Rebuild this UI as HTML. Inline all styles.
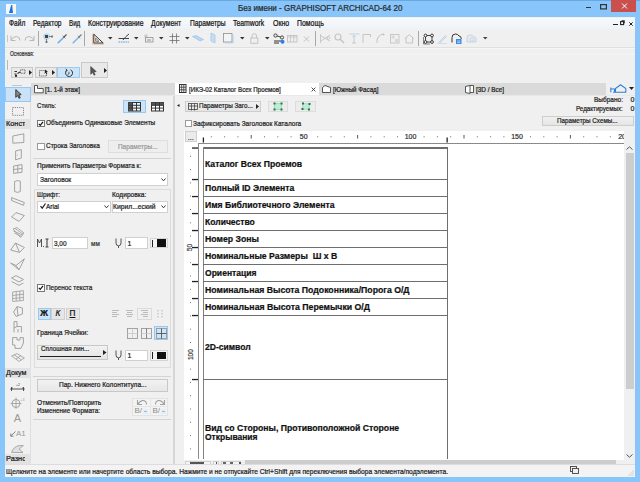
<!DOCTYPE html>
<html><head><meta charset="utf-8"><style>
*{margin:0;padding:0;box-sizing:border-box}
html,body{width:640px;height:482px;overflow:hidden;background:#f0f0f0}
body{position:relative;font-family:"Liberation Sans", sans-serif}
.a{position:absolute}
.t{white-space:pre;transform-origin:0 0;-webkit-text-stroke:0.22px currentColor}
svg{overflow:visible}
</style></head><body>
<div class="a" style="left:0px;top:0px;width:640px;height:482px;background:#87c5fa;"></div>
<div class="a" style="left:0px;top:0px;width:640px;height:1px;background:#6aa9e0"></div>
<svg class="a" style="left:6px;top:4px;" width="10" height="10" viewBox="0 0 10 10"><rect x="0" y="0" width="10" height="10" fill="#f4f8fb"/><path d="M3 9 L5.2 1 L6.5 1 L7 9 Z" fill="#1c6fe8"/><path d="M6.5 1 L9 1 L9 9 L7 9 Z" fill="#fdf6d8"/></svg>
<div class="a t" style="left:237.75px;top:4.39px;font-size:8.2px;line-height:9.02px;font-weight:normal;color:#2a2a2a;transform:scaleX(0.9804);">Без имени - GRAPHISOFT ARCHICAD-64 20</div>
<div class="a" style="left:585.5px;top:7.2px;width:5.5px;height:1.2px;background:#333"></div>
<svg class="a" style="left:599.5px;top:4px;" width="7" height="5.5" viewBox="0 0 7 5.5"><rect x="0.6" y="0.6" width="5.8" height="4.3" fill="none" stroke="#333" stroke-width="1.2"/></svg>
<div class="a" style="left:610.8px;top:0px;width:25px;height:11.8px;background:#c9504d;"></div>
<svg class="a" style="left:620.8px;top:3.2px;" width="7" height="6" viewBox="0 0 7 6"><path d="M1 0.5 L6 5.5 M6 0.5 L1 5.5" stroke="#fff" stroke-width="1"/></svg>
<div class="a" style="left:5px;top:17px;width:630px;height:460px;background:#f0f0f0;"></div>
<div class="a" style="left:5px;top:17.5px;width:630px;height:11px;background:linear-gradient(#ffffff 0px,#f6f8fb 1.5px,#eef3f8);"></div>
<div class="a t" style="left:8.75px;top:18.89px;font-size:8.2px;line-height:9.02px;font-weight:normal;color:#111;transform:scaleX(0.8068);">Файл</div>
<div class="a t" style="left:32.50px;top:18.89px;font-size:8.2px;line-height:9.02px;font-weight:normal;color:#111;transform:scaleX(0.8085);">Редактор</div>
<div class="a t" style="left:68.75px;top:18.89px;font-size:8.2px;line-height:9.02px;font-weight:normal;color:#111;transform:scaleX(0.7595);">Вид</div>
<div class="a t" style="left:87.50px;top:18.89px;font-size:8.2px;line-height:9.02px;font-weight:normal;color:#111;transform:scaleX(0.8360);">Конструирование</div>
<div class="a t" style="left:151.25px;top:18.89px;font-size:8.2px;line-height:9.02px;font-weight:normal;color:#111;transform:scaleX(0.8258);">Документ</div>
<div class="a t" style="left:189.50px;top:18.89px;font-size:8.2px;line-height:9.02px;font-weight:normal;color:#111;transform:scaleX(0.8132);">Параметры</div>
<div class="a t" style="left:233.25px;top:18.89px;font-size:8.2px;line-height:9.02px;font-weight:normal;color:#111;transform:scaleX(0.8375);">Teamwork</div>
<div class="a t" style="left:272.50px;top:18.89px;font-size:8.2px;line-height:9.02px;font-weight:normal;color:#111;transform:scaleX(0.8539);">Окно</div>
<div class="a t" style="left:297.00px;top:18.89px;font-size:8.2px;line-height:9.02px;font-weight:normal;color:#111;transform:scaleX(0.8458);">Помощь</div>
<div class="a" style="left:613px;top:24px;width:4.5px;height:1.2px;background:#222"></div>
<svg class="a" style="left:620.3px;top:20.3px;" width="5" height="5" viewBox="0 0 5 5"><rect x="0.6" y="1.6" width="3" height="3" fill="none" stroke="#222" stroke-width="1.1"/><path d="M1.6 0.6 H4.4 V3.4" fill="none" stroke="#222" stroke-width="0.8"/></svg>
<svg class="a" style="left:628.8px;top:21.8px;" width="4" height="4" viewBox="0 0 4 4"><path d="M0.3 0.3 L3.7 3.7 M3.7 0.3 L0.3 3.7" stroke="#222" stroke-width="1"/></svg>
<div class="a" style="left:5px;top:28.5px;width:630px;height:19px;background:#f0f0f0;"></div>
<div class="a" style="left:5px;top:47px;width:630px;height:1px;background:#e0e0e0"></div>
<div class="a" style="left:5px;top:48px;width:630px;height:1px;background:#f6f6f6"></div>
<div class="a" style="left:5px;top:54px;width:630px;height:1px;background:#f5f5f5"></div>
<div class="a t" style="left:10.00px;top:49.72px;font-size:6.5px;line-height:7.15px;font-weight:normal;color:#333;transform:scaleX(0.7619);">Основная:</div>
<div class="a" style="left:7px;top:60px;width:1px;height:10px;background:#b8b8b8"></div>
<div class="a" style="left:10.5px;top:67px;width:22.0px;height:10.5px;background:#e9e9e9;box-shadow:inset 0 0 0 1px #c9c9c9;"></div>
<div class="a" style="left:34.5px;top:67px;width:22.0px;height:10.5px;background:#e9e9e9;box-shadow:inset 0 0 0 1px #c9c9c9;"></div>
<div class="a" style="left:57px;top:67px;width:23px;height:10.5px;background:#cce4f7;box-shadow:inset 0 0 0 1px #9ccaf0;"></div>
<div class="a" style="left:81px;top:62px;width:27px;height:15.5px;background:#e9e9e9;box-shadow:inset 0 0 0 1px #c9c9c9;"></div>
<div class="a" style="left:31px;top:82.5px;width:604px;height:12px;background:#dadada;"></div>
<div class="a" style="left:174.5px;top:82.5px;width:144px;height:12px;background:#ffffff;"></div>
<div class="a" style="left:5px;top:94.5px;width:630px;height:1px;background:#e8e8e8"></div>
<div class="a" style="left:5px;top:82.5px;width:26px;height:381.5px;background:#f1f1f1;"></div>
<div class="a" style="left:30.3px;top:95px;width:1px;height:369px;background:#dedede"></div>
<div class="a" style="left:5px;top:86.6px;width:26px;height:15.7px;background:#c9e2f8;box-shadow:inset 0 0 0 1px #98c8f0;"></div>
<div class="a" style="left:5px;top:119px;width:25.5px;height:9.5px;background:#e2e2e2;"></div>
<div class="a t" style="left:5.80px;top:119.94px;font-size:7.2px;line-height:7.92px;font-weight:normal;color:#1a1a1a;transform:scaleX(1.0197);">Констр</div>
<div class="a" style="left:25.3px;top:119px;width:5.2px;height:9.5px;background:#e2e2e2;"></div>
<div class="a" style="left:5px;top:367.5px;width:25.5px;height:10px;background:#e2e2e2;"></div>
<div class="a t" style="left:5.80px;top:368.74px;font-size:7.2px;line-height:7.92px;font-weight:normal;color:#1a1a1a;transform:scaleX(0.9932);">Докум</div>
<div class="a" style="left:5px;top:453.5px;width:25.5px;height:10px;background:#e2e2e2;"></div>
<div class="a t" style="left:5.80px;top:454.74px;font-size:7.2px;line-height:7.92px;font-weight:normal;color:#1a1a1a;transform:scaleX(1.0288);">Разнос</div>
<div class="a" style="left:25.3px;top:453.5px;width:5.2px;height:10px;background:#e2e2e2;"></div>
<svg class="a" style="left:33.5px;top:84.8px;" width="10" height="8.5" viewBox="0 0 10 8.5"><path d="M0.5 0.5 H3.5 V3.5 H9.2 V7.8 H0.5 Z" fill="#fff" stroke="#444" stroke-width="0.9"/></svg>
<div class="a t" style="left:45.00px;top:86.38px;font-size:6.4px;line-height:7.04px;font-weight:normal;color:#222;transform:scaleX(0.9859);">[1. 1-й этаж]</div>
<svg class="a" style="left:179.2px;top:84.3px;" width="7.5" height="9" viewBox="0 0 7.5 9"><rect x="0.5" y="0.5" width="6.5" height="8" fill="none" stroke="#333" stroke-width="1"/><path d="M0.5 3.2 H7 M0.5 5.8 H7 M2.7 0.5 V8.5 M4.8 0.5 V8.5" stroke="#333" stroke-width="0.8"/></svg>
<div class="a t" style="left:188.75px;top:85.88px;font-size:6.4px;line-height:7.04px;font-weight:normal;color:#222;transform:scaleX(0.9666);">[ИКЭ-02 Каталог Всех Проемов]</div>
<svg class="a" style="left:310.5px;top:87.2px;" width="5" height="5" viewBox="0 0 5 5"><path d="M0.6 0.6 L4.4 4.4 M4.4 0.6 L0.6 4.4" stroke="#333" stroke-width="0.9"/></svg>
<svg class="a" style="left:322px;top:85px;" width="9" height="8" viewBox="0 0 9 8"><path d="M0.5 7.5 V2.5 L3 0.5 L8.5 2.5 V7.5 Z" fill="#fff" stroke="#444" stroke-width="0.9"/></svg>
<div class="a t" style="left:332.50px;top:85.88px;font-size:6.4px;line-height:7.04px;font-weight:normal;color:#222;transform:scaleX(0.9752);">[Южный Фасад]</div>
<svg class="a" style="left:465px;top:84.5px;" width="9" height="9" viewBox="0 0 9 9"><path d="M0.5 1.5 L5 0.5 V8.5 L0.5 7.5 Z M5 0.5 H8.5 V7.5 H5" fill="#fff" stroke="#444" stroke-width="0.9"/></svg>
<div class="a t" style="left:476.00px;top:85.88px;font-size:6.4px;line-height:7.04px;font-weight:normal;color:#222;">[3D / Все]</div>
<div class="a" style="left:606px;top:82.5px;width:29px;height:12px;background:#f0f0f0;"></div>
<svg class="a" style="left:609.5px;top:84px;" width="17" height="9" viewBox="0 0 17 9"><path d="M0.8 3.5 V8.3 M0.8 5 H4.5 V8.3 M3 8.3 H16.2 M5.5 8.3 V4.5 L10.5 0.8 L15.8 4.5 V8.3" fill="none" stroke="#2e80d8" stroke-width="1.1"/></svg>
<svg class="a" style="left:629px;top:87px;" width="5" height="3" viewBox="0 0 5 3"><path d="M0 0 H5 L2.5 3 Z" fill="#222"/></svg>
<div class="a" style="left:30.5px;top:95.5px;width:143.5px;height:368.5px;background:#f0f0f0;"></div>
<div class="a" style="left:173.3px;top:95.5px;width:1.7px;height:368.5px;background:#d6d6d6"></div>
<div class="a t" style="left:36.75px;top:102.45px;font-size:7.0px;line-height:7.70px;font-weight:normal;color:#222;transform:scaleX(0.8692);">Стиль:</div>
<div class="a" style="left:123px;top:99.5px;width:23px;height:13.5px;background:#cce4f7;box-shadow:inset 0 0 0 1px #99c8ef;"></div>
<svg class="a" style="left:128px;top:101.8px;" width="13" height="9.5" viewBox="0 0 13 9.5"><rect x="0.5" y="0.5" width="12" height="8.5" fill="#eaf4fc" stroke="#333" stroke-width="1"/><rect x="0.5" y="0.5" width="4" height="8.5" fill="#555"/><path d="M0.5 3.3 H12.5 M0.5 6.1 H12.5 M4.5 0.5 V9 M8.5 0.5 V9" stroke="#333" stroke-width="1"/></svg>
<svg class="a" style="left:150.8px;top:101.8px;" width="13" height="9.5" viewBox="0 0 13 9.5"><rect x="0.5" y="0.5" width="12" height="8.5" fill="#fff" stroke="#333" stroke-width="1"/><rect x="0.5" y="0.5" width="12" height="2.8" fill="#555"/><path d="M0.5 3.3 H12.5 M0.5 6.1 H12.5 M4.5 0.5 V9 M8.5 0.5 V9" stroke="#333" stroke-width="1"/></svg>
<div class="a" style="left:37px;top:119.5px;width:7.5px;height:7.5px;background:#ffffff;box-shadow:inset 0 0 0 1px #777;"></div>
<svg class="a" style="left:37px;top:119.5px;" width="8" height="8" viewBox="0 0 8 8"><path d="M1.8 3.8 L3.3 5.4 L6 1.9" fill="none" stroke="#111" stroke-width="1.2"/></svg>
<div class="a t" style="left:45.75px;top:119.35px;font-size:7.0px;line-height:7.70px;font-weight:normal;color:#222;transform:scaleX(0.9246);">Объединить Одинаковые Элементы</div>
<div class="a" style="left:37px;top:142.5px;width:7.5px;height:7.5px;background:#ffffff;box-shadow:inset 0 0 0 1px #9a9a9a;"></div>
<div class="a t" style="left:45.75px;top:142.45px;font-size:7.0px;line-height:7.70px;font-weight:normal;color:#222;transform:scaleX(0.9227);">Строка Заголовка</div>
<div class="a" style="left:107.5px;top:139.5px;width:60px;height:13px;background:#eeeeee;box-shadow:inset 0 0 0 1px #dedede;"></div>
<div class="a t" style="left:117.50px;top:142.55px;font-size:7.0px;line-height:7.70px;font-weight:normal;color:#9a9a9a;transform:scaleX(0.9153);">Параметры...</div>
<div class="a" style="left:33px;top:158px;width:138px;height:1px;background:#d4d4d4"></div>
<div class="a t" style="left:37.00px;top:162.05px;font-size:7.0px;line-height:7.70px;font-weight:normal;color:#222;transform:scaleX(0.9224);">Применить Параметры Формата к:</div>
<div class="a" style="left:37px;top:173px;width:131px;height:12.5px;background:#ffffff;box-shadow:inset 0 0 0 1px #d0d0d0;"></div>
<div class="a t" style="left:40.00px;top:175.55px;font-size:7.0px;line-height:7.70px;font-weight:normal;color:#222;transform:scaleX(0.9492);">Заголовок</div>
<svg class="a" style="left:161px;top:177.5px;" width="5" height="4" viewBox="0 0 5 4"><path d="M0.5 0.5 L2.5 2.8 L4.5 0.5" fill="none" stroke="#333" stroke-width="1"/></svg>
<div class="a" style="left:33.5px;top:189.2px;width:137px;height:178.5px;background:transparent;box-shadow:inset 0 0 0 1px #dcdcdc;"></div>
<div class="a t" style="left:37.00px;top:190.55px;font-size:7.0px;line-height:7.70px;font-weight:normal;color:#222;transform:scaleX(0.9206);">Шрифт:</div>
<div class="a t" style="left:112.00px;top:190.55px;font-size:7.0px;line-height:7.70px;font-weight:normal;color:#222;transform:scaleX(0.9416);">Кодировка:</div>
<div class="a" style="left:37px;top:200.5px;width:73.5px;height:12px;background:#ffffff;box-shadow:inset 0 0 0 1px #d0d0d0;"></div>
<svg class="a" style="left:39.5px;top:203px;" width="6" height="6" viewBox="0 0 6 6"><path d="M0.5 3.2 L2.2 5.2 L5.5 0.5" fill="none" stroke="#222" stroke-width="1.2"/></svg>
<div class="a t" style="left:46.00px;top:202.55px;font-size:7.0px;line-height:7.70px;font-weight:normal;color:#222;transform:scaleX(0.9275);">Arial</div>
<svg class="a" style="left:104px;top:205px;" width="5" height="4" viewBox="0 0 5 4"><path d="M0.5 0.5 L2.5 2.8 L4.5 0.5" fill="none" stroke="#333" stroke-width="1"/></svg>
<div class="a" style="left:111.75px;top:200.5px;width:56.25px;height:12px;background:#ffffff;box-shadow:inset 0 0 0 1px #d0d0d0;"></div>
<div class="a t" style="left:113.00px;top:202.55px;font-size:7.0px;line-height:7.70px;font-weight:normal;color:#222;transform:scaleX(0.9659);">Кирил...еский</div>
<svg class="a" style="left:161px;top:205px;" width="5" height="4" viewBox="0 0 5 4"><path d="M0.5 0.5 L2.5 2.8 L4.5 0.5" fill="none" stroke="#333" stroke-width="1"/></svg>
<svg class="a" style="left:37px;top:238px;" width="13" height="10" viewBox="0 0 13 10"><path d="M0.5 9 V1 L2.5 5 L4.5 1 V9" fill="none" stroke="#444" stroke-width="0.9"/><path d="M6 8.5 H7" stroke="#444" stroke-width="0.9"/><path d="M10 1 V9 M8.5 1 H11.5 M8.5 9 H11.5" stroke="#444" stroke-width="1.1"/></svg>
<div class="a" style="left:52px;top:237px;width:36px;height:12px;background:#ffffff;box-shadow:inset 0 0 0 1px #d0d0d0;"></div>
<div class="a t" style="left:53.75px;top:239.95px;font-size:7.0px;line-height:7.70px;font-weight:normal;color:#222;transform:scaleX(0.9174);">3,00</div>
<div class="a t" style="left:90.50px;top:240.25px;font-size:7.0px;line-height:7.70px;font-weight:normal;color:#333;transform:scaleX(0.9091);">мм</div>
<svg class="a" style="left:114.5px;top:238px;" width="7" height="10" viewBox="0 0 7 10"><path d="M1 0.5 V5 Q1 7.8 3.5 7.8 Q6 7.8 6 5 V0.5 M3.5 7.8 V10" fill="none" stroke="#444" stroke-width="0.9"/></svg>
<div class="a" style="left:125px;top:237px;width:23px;height:12px;background:#ffffff;box-shadow:inset 0 0 0 1px #d0d0d0;"></div>
<div class="a t" style="left:127.50px;top:239.95px;font-size:7.0px;line-height:7.70px;font-weight:normal;color:#222;">1</div>
<div class="a" style="left:150px;top:238px;width:18px;height:10px;background:#f4f4f4;box-shadow:inset 0 0 0 1px #d4d4d4;"></div>
<div class="a" style="left:152.3px;top:239.5px;width:1.2px;height:7.2px;background:#222"></div>
<div class="a" style="left:156.5px;top:239.4px;width:9.8px;height:7.5px;background:#111;"></div>
<div class="a" style="left:37px;top:284px;width:7.5px;height:7.5px;background:#ffffff;box-shadow:inset 0 0 0 1px #777;"></div>
<svg class="a" style="left:37px;top:284px;" width="8" height="8" viewBox="0 0 8 8"><path d="M1.8 3.8 L3.3 5.4 L6 1.9" fill="none" stroke="#111" stroke-width="1.2"/></svg>
<div class="a t" style="left:45.75px;top:284.25px;font-size:7.0px;line-height:7.70px;font-weight:normal;color:#222;transform:scaleX(0.9139);">Перенос текста</div>
<div class="a" style="left:37.5px;top:308px;width:13px;height:11.5px;background:#cce4f7;box-shadow:inset 0 0 0 1px #99c8ef;"></div>
<div class="a t" style="left:40.16px;top:309.02px;font-size:8.5px;line-height:9.35px;font-weight:bold;color:#111;">Ж</div>
<div class="a" style="left:51.25px;top:308px;width:13.25px;height:11.5px;background:#e6e6e6;box-shadow:inset 0 0 0 1px #d0d0d0;"></div>
<div class="a t" style="left:55.41px;top:309.19px;font-size:8.2px;line-height:9.02px;font-weight:normal;color:#111;font-style:italic;">К</div>
<div class="a" style="left:65.5px;top:308px;width:14px;height:11.5px;background:#e6e6e6;box-shadow:inset 0 0 0 1px #d0d0d0;"></div>
<div class="a t" style="left:69.55px;top:309.19px;font-size:8.2px;line-height:9.02px;font-weight:normal;color:#111;text-decoration:underline;">П</div>
<svg class="a" style="left:111px;top:309px;" width="9" height="9" viewBox="0 0 9 9"><path d="M1 1.5 H8 M1 3.5 H6 M1 5.5 H8 M1 7.5 H6" stroke="#b5b5b5" stroke-width="0.9"/></svg>
<svg class="a" style="left:125px;top:309px;" width="9" height="9" viewBox="0 0 9 9"><path d="M1 1.5 H8 M2 3.5 H7 M1 5.5 H8 M2 7.5 H7" stroke="#b5b5b5" stroke-width="0.9"/></svg>
<svg class="a" style="left:140px;top:309px;" width="9" height="9" viewBox="0 0 9 9"><path d="M1 1.5 H8 M3 3.5 H8 M1 5.5 H8 M3 7.5 H8" stroke="#b5b5b5" stroke-width="0.9"/></svg>
<svg class="a" style="left:156px;top:309px;" width="9" height="9" viewBox="0 0 9 9"><path d="M2 1 V2.5 M2 4 V5.5 M2 7 V8.5 M6 1 V2.5 M6 4 V5.5 M6 7 V8.5" stroke="#b5b5b5" stroke-width="1"/></svg>
<div class="a" style="left:136.5px;top:307.5px;width:15.5px;height:12px;background:transparent;box-shadow:inset 0 0 0 1px #dadada;"></div>
<div class="a t" style="left:37.00px;top:328.55px;font-size:7.0px;line-height:7.70px;font-weight:normal;color:#222;transform:scaleX(0.9450);">Граница Ячейки:</div>
<svg class="a" style="left:126.5px;top:327.5px;" width="11" height="11" viewBox="0 0 11 11"><rect x="0.5" y="0.5" width="10" height="10" fill="none" stroke="#9a9a9a" stroke-width="0.9"/><path d="M5.5 0.5 V10.5 M0.5 5.5 H10.5" stroke="#c8c8c8" stroke-width="0.8"/></svg>
<svg class="a" style="left:140.5px;top:327.5px;" width="11" height="11" viewBox="0 0 11 11"><rect x="0.5" y="0.5" width="10" height="10" fill="none" stroke="#9a9a9a" stroke-width="0.9"/><path d="M5.5 0.5 V10.5" stroke="#777" stroke-width="0.9"/><path d="M0.5 5.5 H10.5" stroke="#c8c8c8" stroke-width="0.8"/></svg>
<div class="a" style="left:154px;top:326px;width:14px;height:13.5px;background:#cce4f7;box-shadow:inset 0 0 0 1px #99c8ef;"></div>
<svg class="a" style="left:155.5px;top:327.5px;" width="11" height="11" viewBox="0 0 11 11"><rect x="0.5" y="0.5" width="10" height="10" fill="none" stroke="#9a9a9a" stroke-width="0.9"/><path d="M5.5 0.5 V10.5 M0.5 5.5 H10.5" stroke="#555" stroke-width="0.9"/></svg>
<div class="a" style="left:37px;top:344.5px;width:71px;height:15px;background:linear-gradient(#f2f2f2,#e4e4e4);box-shadow:inset 0 0 0 1px #c8c8c8;"></div>
<div class="a t" style="left:40.50px;top:345.05px;font-size:7.0px;line-height:7.70px;font-weight:normal;color:#222;transform:scaleX(0.8982);">Сплошная лин...</div>
<div class="a" style="left:40px;top:355.5px;width:61px;height:1.2px;background:#222"></div>
<svg class="a" style="left:103px;top:350px;" width="4" height="5" viewBox="0 0 4 5"><path d="M0 0 L3.5 2.5 L0 5 Z" fill="#222"/></svg>
<svg class="a" style="left:114.5px;top:350px;" width="7" height="10" viewBox="0 0 7 10"><path d="M1 0.5 V5 Q1 7.8 3.5 7.8 Q6 7.8 6 5 V0.5 M3.5 7.8 V10" fill="none" stroke="#444" stroke-width="0.9"/></svg>
<div class="a" style="left:125px;top:350px;width:22.5px;height:10.5px;background:#ffffff;box-shadow:inset 0 0 0 1px #d0d0d0;"></div>
<div class="a t" style="left:127.50px;top:351.55px;font-size:7.0px;line-height:7.70px;font-weight:normal;color:#222;">1</div>
<div class="a" style="left:150px;top:350px;width:18px;height:10.5px;background:#f4f4f4;box-shadow:inset 0 0 0 1px #d4d4d4;"></div>
<div class="a" style="left:152.3px;top:351.6px;width:1.2px;height:7.2px;background:#222"></div>
<div class="a" style="left:156.5px;top:351.5px;width:9.8px;height:7.5px;background:#111;"></div>
<div class="a" style="left:33px;top:375.5px;width:138px;height:1px;background:#d4d4d4"></div>
<div class="a" style="left:37px;top:378.75px;width:131px;height:13px;background:linear-gradient(#f3f3f3,#e6e6e6);box-shadow:inset 0 0 0 1px #c8c8c8;"></div>
<div class="a t" style="left:58.75px;top:381.05px;font-size:7.0px;line-height:7.70px;font-weight:normal;color:#222;transform:scaleX(0.9343);">Пар. Нижнего Колонтитула...</div>
<div class="a t" style="left:37.00px;top:399.05px;font-size:7.0px;line-height:7.70px;font-weight:normal;color:#222;transform:scaleX(0.9433);">Отменить/Повторить</div>
<div class="a t" style="left:37.00px;top:407.05px;font-size:7.0px;line-height:7.70px;font-weight:normal;color:#222;transform:scaleX(0.9137);">Изменение Формата:</div>
<div class="a" style="left:132px;top:398px;width:35.5px;height:17.5px;background:#f3f3f3;box-shadow:inset 0 0 0 1px #e2e2e2;"></div>
<div class="a" style="left:132px;top:406.2px;width:35.5px;height:1px;background:#e6e6e6"></div>
<div class="a" style="left:149.5px;top:398px;width:1px;height:17.5px;background:#e6e6e6"></div>
<svg class="a" style="left:136px;top:399.3px;" width="12" height="7" viewBox="0 0 12 7"><path d="M1.5 1 V5.5 H6 M1.8 5.2 Q4.5 1 7.5 1.5 Q10.5 2 10.5 5.5" fill="none" stroke="#a0a0a0" stroke-width="1.1"/></svg>
<svg class="a" style="left:153.5px;top:399.3px;" width="12" height="7" viewBox="0 0 12 7"><path d="M10.5 1 V5.5 H6 M10.2 5.2 Q7.5 1 4.5 1.5 Q1.5 2 1.5 5.5" fill="none" stroke="#a0a0a0" stroke-width="1.1"/></svg>
<div class="a t" style="left:134.50px;top:406.70px;font-size:8px;line-height:8.80px;font-weight:normal;color:#8c8c8c;-webkit-text-stroke:0;">B/</div>
<div class="a" style="left:143px;top:409px;width:5px;height:5px;background:#e3eef8;"></div>
<div class="a" style="left:144px;top:411.3px;width:3px;height:0.8px;background:#9fb9d2"></div>
<div class="a t" style="left:152.50px;top:406.70px;font-size:8px;line-height:8.80px;font-weight:normal;color:#8c8c8c;-webkit-text-stroke:0;">B/</div>
<div class="a" style="left:161px;top:409px;width:5px;height:5px;background:#e3eef8;"></div>
<div class="a" style="left:162px;top:411.3px;width:3px;height:0.8px;background:#9fb9d2"></div>
<div class="a" style="left:33px;top:419px;width:138px;height:1px;background:#d4d4d4"></div>
<div class="a" style="left:175px;top:95.5px;width:460px;height:368.5px;background:#f0f0f0;"></div>
<svg class="a" style="left:176.5px;top:103.5px;" width="2.5" height="3" viewBox="0 0 2.5 3"><path d="M2.5 0 L0 1.5 L2.5 3 Z" fill="#222"/></svg>
<div class="a" style="left:184.5px;top:100.5px;width:76.5px;height:11.5px;background:linear-gradient(#f2f2f2,#e3e3e3);box-shadow:inset 0 0 0 1px #cdcdcd;"></div>
<svg class="a" style="left:188px;top:102.5px;" width="10" height="8" viewBox="0 0 10 8"><rect x="0.5" y="0.5" width="9" height="6" fill="none" stroke="#444" stroke-width="0.8"/><path d="M0.5 3 H9.5 M3.5 0.5 V7.5 M6.5 0.5 V7.5" stroke="#444" stroke-width="0.8"/></svg>
<div class="a t" style="left:198.75px;top:102.05px;font-size:7.0px;line-height:7.70px;font-weight:normal;color:#222;transform:scaleX(0.9031);">Параметры Заго...</div>
<svg class="a" style="left:256px;top:103.5px;" width="3" height="5" viewBox="0 0 3 5"><path d="M0 0 L3 2.5 L0 5 Z" fill="#222"/></svg>
<div class="a" style="left:267.5px;top:100.5px;width:20.5px;height:11.5px;background:#ececec;box-shadow:inset 0 0 0 1px #dcdcdc;"></div>
<svg class="a" style="left:272.5px;top:102px;" width="10" height="9" viewBox="0 0 10 9"><rect x="1.5" y="1.5" width="7" height="6" fill="#b9f0d2" stroke="#7fd0a6" stroke-width="0.6"/><rect x="0.5" y="0.5" width="2" height="2" fill="#2f6f50"/><rect x="7.5" y="0.5" width="2" height="2" fill="#2f6f50"/><rect x="0.5" y="6.5" width="2" height="2" fill="#2f6f50"/><rect x="7.5" y="6.5" width="2" height="2" fill="#2f6f50"/></svg>
<div class="a" style="left:295px;top:100.5px;width:21px;height:11.5px;background:#ececec;box-shadow:inset 0 0 0 1px #dcdcdc;"></div>
<svg class="a" style="left:300.5px;top:102px;" width="10" height="9" viewBox="0 0 10 9"><path d="M2 1.5 L8.5 2 L8 7.5 L1.5 7 Z" fill="#b9f0d2" stroke="#7fd0a6" stroke-width="0.6"/><rect x="1" y="0.5" width="2" height="2" fill="#2f6f50"/><rect x="7.5" y="1" width="2" height="2" fill="#2f6f50"/><rect x="0.5" y="6" width="2" height="2" fill="#2f6f50"/><rect x="7" y="6.5" width="2" height="2" fill="#2f6f50"/></svg>
<div class="a" style="left:184.5px;top:119.5px;width:7.5px;height:7.5px;background:#ffffff;box-shadow:inset 0 0 0 1px #9a9a9a;"></div>
<div class="a t" style="left:193.00px;top:119.55px;font-size:7.0px;line-height:7.70px;font-weight:normal;color:#222;transform:scaleX(0.9303);">Зафиксировать Заголовок Каталога</div>
<div class="a t" style="left:593.80px;top:96.05px;font-size:7.0px;line-height:7.70px;font-weight:normal;color:#222;transform:scaleX(0.9294);">Выбрано:</div>
<div class="a t" style="left:630.50px;top:96.05px;font-size:7.0px;line-height:7.70px;font-weight:normal;color:#222;">0</div>
<div class="a t" style="left:576.00px;top:104.65px;font-size:7.0px;line-height:7.70px;font-weight:normal;color:#222;transform:scaleX(0.8869);">Редактируемых:</div>
<div class="a t" style="left:630.50px;top:104.65px;font-size:7.0px;line-height:7.70px;font-weight:normal;color:#222;">0</div>
<div class="a" style="left:541.5px;top:115.5px;width:92px;height:10.5px;background:linear-gradient(#f2f2f2,#e3e3e3);box-shadow:inset 0 0 0 1px #cdcdcd;"></div>
<div class="a t" style="left:556.75px;top:117.05px;font-size:7.0px;line-height:7.70px;font-weight:normal;color:#222;transform:scaleX(0.8988);">Параметры Схемы...</div>
<div class="a" style="left:184px;top:131px;width:439.5px;height:329.5px;background:#ffffff;"></div>
<div class="a" style="left:184.5px;top:130.5px;width:12.5px;height:11.5px;background:#ebebeb;box-shadow:inset 0 0 0 1px #cfcfcf;"></div>
<div class="a t" style="left:187.78px;top:133.55px;font-size:7.0px;line-height:7.70px;font-weight:normal;color:#333;">...</div>
<div class="a" style="left:198px;top:142.5px;width:425.5px;height:1.4px;background:#8a8a8a"></div>
<div class="a" style="left:197.8px;top:142.5px;width:1.4px;height:316.5px;background:#8a8a8a"></div>
<svg class="a" style="left:198px;top:131px;" width="425" height="12" viewBox="0 0 425 12"><rect x="12.80" y="5.3" width="1" height="1" fill="#666"/><rect x="26.10" y="5.3" width="1" height="1" fill="#666"/><rect x="39.40" y="5.3" width="1" height="1" fill="#666"/><rect x="52.70" y="4" width="1" height="3.5" fill="#555"/><rect x="66.00" y="5.3" width="1" height="1" fill="#666"/><rect x="79.30" y="5.3" width="1" height="1" fill="#666"/><rect x="92.60" y="5.3" width="1" height="1" fill="#666"/><rect x="119.20" y="5.3" width="1" height="1" fill="#666"/><rect x="132.50" y="5.3" width="1" height="1" fill="#666"/><rect x="145.80" y="5.3" width="1" height="1" fill="#666"/><rect x="159.10" y="4" width="1" height="3.5" fill="#555"/><rect x="172.40" y="5.3" width="1" height="1" fill="#666"/><rect x="185.70" y="5.3" width="1" height="1" fill="#666"/><rect x="199.00" y="5.3" width="1" height="1" fill="#666"/><rect x="225.60" y="5.3" width="1" height="1" fill="#666"/><rect x="238.90" y="5.3" width="1" height="1" fill="#666"/><rect x="252.20" y="5.3" width="1" height="1" fill="#666"/><rect x="265.50" y="4" width="1" height="3.5" fill="#555"/><rect x="278.80" y="5.3" width="1" height="1" fill="#666"/><rect x="292.10" y="5.3" width="1" height="1" fill="#666"/><rect x="305.40" y="5.3" width="1" height="1" fill="#666"/><rect x="332.00" y="5.3" width="1" height="1" fill="#666"/><rect x="345.30" y="5.3" width="1" height="1" fill="#666"/><rect x="358.60" y="5.3" width="1" height="1" fill="#666"/><rect x="371.90" y="4" width="1" height="3.5" fill="#555"/><rect x="385.20" y="5.3" width="1" height="1" fill="#666"/><rect x="398.50" y="5.3" width="1" height="1" fill="#666"/><rect x="411.80" y="5.3" width="1" height="1" fill="#666"/><rect x="4.75" y="6.5" width="1.3" height="5" fill="#222"/><rect x="248.5" y="6.5" width="1.3" height="5" fill="#222"/></svg>
<div class="a t" style="left:299.85px;top:133.25px;font-size:7px;line-height:7.70px;font-weight:normal;color:#333;">50</div>
<div class="a t" style="left:404.66px;top:133.25px;font-size:7px;line-height:7.70px;font-weight:normal;color:#333;">100</div>
<div class="a t" style="left:511.16px;top:133.25px;font-size:7px;line-height:7.70px;font-weight:normal;color:#333;">150</div>
<div class="a t" style="left:618.16px;top:133.25px;font-size:7px;line-height:7.70px;font-weight:normal;color:#333;">200</div>
<div class="a" style="left:623.5px;top:131px;width:11.5px;height:12px;background:#f0f0f0;"></div>
<svg class="a" style="left:184px;top:131px;" width="14" height="330" viewBox="0 0 14 330"><rect x="8" y="16.40" width="6" height="1.3" fill="#222"/><rect x="8" y="47.90" width="6" height="1.3" fill="#222"/><rect x="8" y="64.90" width="6" height="1.3" fill="#222"/><rect x="8" y="81.90" width="6" height="1.3" fill="#222"/><rect x="8" y="98.90" width="6" height="1.3" fill="#222"/><rect x="8" y="115.90" width="6" height="1.3" fill="#222"/><rect x="8" y="132.90" width="6" height="1.3" fill="#222"/><rect x="8" y="149.90" width="6" height="1.3" fill="#222"/><rect x="8" y="166.90" width="6" height="1.3" fill="#222"/><rect x="8" y="183.90" width="6" height="1.3" fill="#222"/><rect x="8" y="247.90" width="6" height="1.3" fill="#222"/><rect x="6" y="24.80" width="1" height="1" fill="#777"/><rect x="6" y="38.10" width="1" height="1" fill="#777"/><rect x="6" y="51.40" width="1" height="1" fill="#777"/><rect x="6" y="64.70" width="1" height="1" fill="#777"/><rect x="6" y="78.00" width="1" height="1" fill="#777"/><rect x="6" y="91.30" width="1" height="1" fill="#777"/><rect x="6" y="104.60" width="1" height="1" fill="#777"/><rect x="6" y="131.20" width="1" height="1" fill="#777"/><rect x="6" y="144.50" width="1" height="1" fill="#777"/><rect x="6" y="157.80" width="1" height="1" fill="#777"/><rect x="6" y="171.10" width="1" height="1" fill="#777"/><rect x="6" y="184.40" width="1" height="1" fill="#777"/><rect x="6" y="197.70" width="1" height="1" fill="#777"/><rect x="6" y="211.00" width="1" height="1" fill="#777"/><rect x="6" y="237.60" width="1" height="1" fill="#777"/><rect x="6" y="250.90" width="1" height="1" fill="#777"/><rect x="6" y="264.20" width="1" height="1" fill="#777"/><rect x="6" y="277.50" width="1" height="1" fill="#777"/><rect x="6" y="290.80" width="1" height="1" fill="#777"/><rect x="6" y="304.10" width="1" height="1" fill="#777"/><rect x="6" y="317.40" width="1" height="1" fill="#777"/></svg>
<div class="a t" style="left:186.38px;top:244.33px;font-size:6.5px;line-height:7.15px;font-weight:normal;color:#444;transform:rotate(-90deg);transform-origin:50% 50%;">50</div>
<div class="a t" style="left:184.57px;top:351.32px;font-size:6.5px;line-height:7.15px;font-weight:normal;color:#444;transform:rotate(-90deg);transform-origin:50% 50%;">100</div>
<div class="a" style="left:202.5px;top:147.3px;width:245.5px;height:1.6px;background:#6e6e6e"></div>
<div class="a" style="left:202.7px;top:147.3px;width:1.4px;height:311.5px;background:#808080"></div>
<div class="a" style="left:446.5px;top:147.3px;width:1.6px;height:311.5px;background:#6e6e6e"></div>
<div class="a" style="left:202.5px;top:178.7px;width:245.5px;height:1.6px;background:#6e6e6e"></div>
<div class="a" style="left:202.5px;top:195.7px;width:245.5px;height:1.6px;background:#6e6e6e"></div>
<div class="a" style="left:202.5px;top:212.7px;width:245.5px;height:1.6px;background:#6e6e6e"></div>
<div class="a" style="left:202.5px;top:229.7px;width:245.5px;height:1.6px;background:#6e6e6e"></div>
<div class="a" style="left:202.5px;top:246.7px;width:245.5px;height:1.6px;background:#6e6e6e"></div>
<div class="a" style="left:202.5px;top:263.7px;width:245.5px;height:1.6px;background:#6e6e6e"></div>
<div class="a" style="left:202.5px;top:280.7px;width:245.5px;height:1.6px;background:#6e6e6e"></div>
<div class="a" style="left:202.5px;top:297.7px;width:245.5px;height:1.6px;background:#6e6e6e"></div>
<div class="a" style="left:202.5px;top:314.7px;width:245.5px;height:1.6px;background:#6e6e6e"></div>
<div class="a" style="left:202.5px;top:378.7px;width:245.5px;height:1.6px;background:#6e6e6e"></div>
<div class="a t" style="left:205.20px;top:159.60px;font-size:8.9px;line-height:9.79px;font-weight:bold;color:#111;transform:scaleX(0.9721);">Каталог Всех Проемов</div>
<div class="a t" style="left:205.20px;top:184.20px;font-size:8.9px;line-height:9.79px;font-weight:bold;color:#111;transform:scaleX(0.9707);">Полный ID Элемента</div>
<div class="a t" style="left:205.20px;top:201.00px;font-size:8.9px;line-height:9.79px;font-weight:bold;color:#111;transform:scaleX(0.9736);">Имя Библиотечного Элемента</div>
<div class="a t" style="left:205.20px;top:217.81px;font-size:8.9px;line-height:9.79px;font-weight:bold;color:#111;transform:scaleX(0.9626);">Количество</div>
<div class="a t" style="left:205.20px;top:234.70px;font-size:8.9px;line-height:9.79px;font-weight:bold;color:#111;transform:scaleX(0.9794);">Номер Зоны</div>
<div class="a t" style="left:205.20px;top:252.20px;font-size:8.9px;line-height:9.79px;font-weight:bold;color:#111;transform:scaleX(0.9790);">Номинальные Размеры  Ш x В</div>
<div class="a t" style="left:205.20px;top:269.40px;font-size:8.9px;line-height:9.79px;font-weight:bold;color:#111;transform:scaleX(0.9635);">Ориентация</div>
<div class="a t" style="left:205.20px;top:285.90px;font-size:8.9px;line-height:9.79px;font-weight:bold;color:#111;transform:scaleX(0.9791);">Номинальная Высота Подоконника/Порога О/Д</div>
<div class="a t" style="left:205.20px;top:302.70px;font-size:8.9px;line-height:9.79px;font-weight:bold;color:#111;transform:scaleX(0.9830);">Номинальная Высота Перемычки О/Д</div>
<div class="a t" style="left:205.20px;top:343.20px;font-size:8.9px;line-height:9.79px;font-weight:bold;color:#111;transform:scaleX(0.9634);">2D-символ</div>
<div class="a t" style="left:205.20px;top:423.70px;font-size:8.9px;line-height:9.79px;font-weight:bold;color:#111;transform:scaleX(0.9773);">Вид со Стороны, Противоположной Стороне</div>
<div class="a t" style="left:205.20px;top:433.31px;font-size:8.9px;line-height:9.79px;font-weight:bold;color:#111;transform:scaleX(0.9551);">Открывания</div>
<div class="a" style="left:623.5px;top:143px;width:11px;height:317px;background:#f0f0f0;"></div>
<svg class="a" style="left:625.5px;top:146px;" width="7" height="4" viewBox="0 0 7 4"><path d="M0.5 3.5 L3.5 0.8 L6.5 3.5" fill="none" stroke="#555" stroke-width="1"/></svg>
<div class="a" style="left:626px;top:153px;width:8px;height:235.5px;background:#cdcdcd;"></div>
<svg class="a" style="left:625.5px;top:453.5px;" width="7" height="4" viewBox="0 0 7 4"><path d="M0.5 0.5 L3.5 3.2 L6.5 0.5" fill="none" stroke="#555" stroke-width="1"/></svg>
<svg class="a" style="left:619.5px;top:461px;" width="4" height="3" viewBox="0 0 4 3"><path d="M0 3 L2 0.5 L4 3 Z" fill="#555"/></svg>
<div class="a" style="left:184px;top:460px;width:439.5px;height:4px;background:#f0f0f0;"></div>
<div class="a" style="left:245px;top:460px;width:371px;height:3.5px;background:#cdcdcd;"></div>
<div class="a" style="left:184.5px;top:460.5px;width:26.5px;height:4px;background:#f4f4f4;box-shadow:inset 0 0 0 1px #cfcfcf;"></div>
<div class="a" style="left:190px;top:462.3px;width:14px;height:1.4px;background:#555"></div>
<div class="a" style="left:213px;top:460.5px;width:6px;height:4px;background:#f4f4f4;box-shadow:inset 0 0 0 1px #cfcfcf;"></div>
<div class="a" style="left:215.5px;top:462.3px;width:1.3px;height:1.5px;background:#555"></div>
<div class="a" style="left:221px;top:460.5px;width:20px;height:4px;background:#f4f4f4;box-shadow:inset 0 0 0 1px #cfcfcf;"></div>
<div class="a" style="left:222.5px;top:461.8px;width:3px;height:2px;background:#666"></div>
<div class="a" style="left:230px;top:461.8px;width:3px;height:2px;background:#666"></div>
<div class="a" style="left:239px;top:462.3px;width:1.5px;height:1.5px;background:#555"></div>
<div class="a" style="left:5px;top:464px;width:630px;height:13px;background:#f3f3f3;"></div>
<div class="a" style="left:5px;top:464px;width:630px;height:1px;background:#dddddd"></div>
<div class="a t" style="left:6.00px;top:468.35px;font-size:7.0px;line-height:7.70px;font-weight:normal;color:#222;transform:scaleX(0.9528);">Щелкните на элементе или начертите область выбора. Нажмите и не отпускайте Ctrl+Shift для переключения выбора элемента/подэлемента.</div>
<svg class="a" style="left:569.5px;top:466.3px;" width="9" height="8" viewBox="0 0 9 8"><rect x="0.5" y="0.5" width="6" height="5" fill="none" stroke="#444" stroke-width="0.9"/><rect x="2.5" y="2.5" width="6" height="5" fill="#f0f0f0" stroke="#444" stroke-width="0.9"/></svg>
<div class="a" style="left:7px;top:35px;width:1px;height:7px;background:#c8c8c8"></div>
<svg class="a" style="left:10px;top:34.5px;" width="11" height="7" viewBox="0 0 11 7"><path d="M1 0.8 V5.5 H5.5 M1.2 5.2 Q3.5 1.2 6.5 1.5 Q10 2 10 5.5" fill="none" stroke="#b8b8b8" stroke-width="1"/></svg>
<svg class="a" style="left:24px;top:34.5px;" width="11" height="7" viewBox="0 0 11 7"><path d="M10 0.8 V5.5 H5.5 M9.8 5.2 Q7.5 1.2 4.5 1.5 Q1 2 1 5.5" fill="none" stroke="#b8b8b8" stroke-width="1"/></svg>
<div class="a" style="left:38px;top:30.5px;width:1px;height:15.0px;background:#a8a8a8"></div>
<svg class="a" style="left:42.5px;top:33px;" width="11" height="11" viewBox="0 0 11 11"><circle cx="3.5" cy="3.5" r="3.3" fill="#b9d9f5"/><rect x="2" y="2" width="3" height="3" fill="#444"/><path d="M6 3.5 H10 M9 2 V5 M3.5 6 V10 M2 9 H5" stroke="#666" stroke-width="0.8"/></svg>
<svg class="a" style="left:57px;top:33px;" width="11" height="11" viewBox="0 0 11 11"><path d="M1.2 9.8 L6.8 4.2" stroke="#72ade6" stroke-width="1.6" stroke-linecap="round"/><path d="M6.5 4.5 L9.5 1.5" stroke="#555" stroke-width="1.1"/><path d="M5.7 2.7 L8.3 5.3" stroke="#666" stroke-width="0.8"/></svg>
<svg class="a" style="left:71.5px;top:33px;" width="11" height="11" viewBox="0 0 11 11"><path d="M1.2 9.8 L6.8 4.2" stroke="#80b8ea" stroke-width="1.6" stroke-linecap="round"/><path d="M6.5 4.5 L9.5 1.5" stroke="#777" stroke-width="1.1"/><path d="M5.7 2.7 L8.3 5.3" stroke="#888" stroke-width="0.8"/></svg>
<div class="a" style="left:84px;top:30.5px;width:1px;height:15.0px;background:#a8a8a8"></div>
<svg class="a" style="left:91.5px;top:32.5px;" width="13" height="12" viewBox="0 0 13 12"><path d="M0.6 1 V11.2 H12" fill="none" stroke="#f5b37a" stroke-width="0.9"/><path d="M1.8 1.2 L11.2 10 H1.8 Z" fill="#f4f4f4" stroke="#333" stroke-width="1"/><path d="M3.6 5 L7 8.3 H3.6 Z" fill="#ddd" stroke="#666" stroke-width="0.8"/></svg>
<svg class="a" style="left:107.5px;top:37px;" width="5" height="3" viewBox="0 0 5 3"><path d="M0 0 H4.5 L2.25 2.6 Z" fill="#333"/></svg>
<svg class="a" style="left:117.5px;top:33px;" width="12" height="10" viewBox="0 0 12 10"><path d="M0.5 5.5 H11" stroke="#444" stroke-width="1"/><path d="M5 7 L8 3.5 L11 1" fill="none" stroke="#444" stroke-width="1"/><path d="M0.5 9 H11" stroke="#5a9de0" stroke-width="1" stroke-dasharray="1.6 0.8"/></svg>
<svg class="a" style="left:133.5px;top:37px;" width="5" height="3" viewBox="0 0 5 3"><path d="M0 0 H4.5 L2.25 2.6 Z" fill="#333"/></svg>
<svg class="a" style="left:143.5px;top:33.5px;" width="10" height="9" viewBox="0 0 10 9"><rect x="0.5" y="0.5" width="3" height="3" fill="#c8c8c8"/><rect x="1.5" y="3.5" width="7.5" height="4.5" fill="none" stroke="#9a9a9a" stroke-width="0.9"/><path d="M3 6 H7" stroke="#777" stroke-width="0.8"/></svg>
<svg class="a" style="left:159px;top:37px;" width="5" height="3" viewBox="0 0 5 3"><path d="M0 0 H4.5 L2.25 2.6 Z" fill="#333"/></svg>
<svg class="a" style="left:169px;top:33px;" width="11" height="11" viewBox="0 0 11 11"><path d="M3.5 0.5 V10.5 M7.5 0.5 V10.5 M0.5 3.5 H10.5 M0.5 7.5 H10.5" stroke="#707070" stroke-width="0.8"/></svg>
<svg class="a" style="left:185.3px;top:37px;" width="5" height="3" viewBox="0 0 5 3"><path d="M0 0 H4.5 L2.25 2.6 Z" fill="#333"/></svg>
<svg class="a" style="left:192px;top:35px;" width="12" height="7" viewBox="0 0 12 7"><path d="M0.5 1.5 L4 0.5 L11.5 4.5 L8 6 Z" fill="#b8d7f3" stroke="#8fbde8" stroke-width="0.6"/></svg>
<svg class="a" style="left:209.5px;top:32px;" width="6" height="12" viewBox="0 0 6 12"><path d="M1 1 L5 3 V11 L1 9 Z" fill="#c6def5" stroke="#9cc3ea" stroke-width="0.7"/></svg>
<svg class="a" style="left:222.5px;top:32.5px;" width="11" height="10" viewBox="0 0 11 10"><rect x="0.5" y="0.5" width="8.5" height="8.5" fill="#f4f4f4" stroke="#9a9a9a" stroke-width="0.9"/><path d="M10 2 V9.8 H2" fill="none" stroke="#a9cdf0" stroke-width="1"/></svg>
<svg class="a" style="left:239.5px;top:37px;" width="5" height="3" viewBox="0 0 5 3"><path d="M0 0 H4.5 L2.25 2.6 Z" fill="#333"/></svg>
<svg class="a" style="left:250px;top:32.5px;" width="9" height="11" viewBox="0 0 9 11"><path d="M2 5 V3 Q2 0.7 4.3 0.7 Q6.6 0.7 6.6 3 V5" fill="none" stroke="#c4c4c4" stroke-width="1"/><rect x="0.8" y="5" width="7" height="5.3" fill="none" stroke="#c4c4c4" stroke-width="1"/></svg>
<svg class="a" style="left:264.5px;top:37px;" width="5" height="3" viewBox="0 0 5 3"><path d="M0 0 H4.5 L2.25 2.6 Z" fill="#333"/></svg>
<svg class="a" style="left:272.5px;top:32.5px;" width="12" height="11.5" viewBox="0 0 12 11.5"><circle cx="2.5" cy="2.5" r="1.6" fill="none" stroke="#333" stroke-width="0.9"/><circle cx="9" cy="4.5" r="1.6" fill="none" stroke="#333" stroke-width="0.9"/><path d="M4 3 L7.5 4" stroke="#333" stroke-width="0.9"/><path d="M1 8 H8 M1 10 H6" stroke="#333" stroke-width="1.2"/><circle cx="9.5" cy="8.8" r="2" fill="#2a7fe0"/></svg>
<svg class="a" style="left:287px;top:34.5px;" width="11" height="8" viewBox="0 0 11 8"><rect x="0.5" y="0.5" width="9.5" height="6.5" fill="none" stroke="#c2c2c2" stroke-width="0.9"/><path d="M0.5 2 H10 M3.5 0.5 V7 M6.8 0.5 V7" stroke="#c2c2c2" stroke-width="0.8"/></svg>
<svg class="a" style="left:302.5px;top:35.5px;" width="7" height="6" viewBox="0 0 7 6"><path d="M1 0.5 L6 5.5 M6 0.5 L1 5.5" stroke="#c2c2c2" stroke-width="1"/></svg>
<div class="a" style="left:315px;top:30.5px;width:1px;height:15.0px;background:#a8a8a8"></div>
<svg class="a" style="left:319.5px;top:33px;" width="11" height="11" viewBox="0 0 11 11"><path d="M0.5 1 V10 M1 8 L10 2 M1 3 L10 8" stroke="#c4c4c4" stroke-width="0.9" fill="none"/><circle cx="8.5" cy="5" r="1.3" fill="none" stroke="#c4c4c4" stroke-width="0.8"/></svg>
<svg class="a" style="left:333.5px;top:33px;" width="11" height="11" viewBox="0 0 11 11"><circle cx="4" cy="4" r="3" fill="none" stroke="#c4c4c4" stroke-width="1.1"/><path d="M6 6 L10 10" stroke="#c4c4c4" stroke-width="1.6"/></svg>
<svg class="a" style="left:348.5px;top:33px;" width="11" height="11" viewBox="0 0 11 11"><path d="M0.5 1 H10.5" stroke="#bcd6ef" stroke-width="1"/><path d="M5 2 V10 M3 10 H7" stroke="#c4c4c4" stroke-width="0.9"/><path d="M3.5 4 L5 2.5 L6.5 4" fill="none" stroke="#c4c4c4" stroke-width="0.8"/></svg>
<svg class="a" style="left:362px;top:33px;" width="10" height="11" viewBox="0 0 10 11"><path d="M1 10 V1.5 H8.5 V4" fill="none" stroke="#c4c4c4" stroke-width="1"/></svg>
<svg class="a" style="left:376px;top:33px;" width="9" height="11" viewBox="0 0 9 11"><path d="M1 10 V7 Q2 2 7.5 1" fill="none" stroke="#c4c4c4" stroke-width="1"/><circle cx="7.5" cy="1.5" r="1" fill="#c4c4c4"/></svg>
<svg class="a" style="left:390px;top:33.5px;" width="10" height="9.5" viewBox="0 0 10 9.5"><rect x="0.5" y="0.5" width="8.5" height="8.5" fill="none" stroke="#c4c4c4" stroke-width="0.9"/><rect x="1.5" y="1.5" width="3" height="3" fill="#d8d8d8"/><rect x="5" y="5" width="3" height="3" fill="#d8d8d8"/></svg>
<svg class="a" style="left:403.5px;top:33.5px;" width="11" height="9.5" viewBox="0 0 11 9.5"><path d="M0.8 4.5 L5.3 0.7 L9.8 4.5 M2 3.5 V9 H8.6 V3.5" fill="none" stroke="#c4c4c4" stroke-width="1"/></svg>
<div class="a" style="left:417.5px;top:30.5px;width:1px;height:15.0px;background:#a8a8a8"></div>
<svg class="a" style="left:422.5px;top:32.5px;" width="11.5" height="11.5" viewBox="0 0 11.5 11.5"><rect x="2.5" y="2.5" width="6.5" height="6.5" fill="none" stroke="#333" stroke-width="0.9"/><circle cx="2.5" cy="2.5" r="1.4" fill="#fff" stroke="#222" stroke-width="0.9"/><circle cx="9" cy="2.5" r="1.4" fill="#fff" stroke="#222" stroke-width="0.9"/><circle cx="2.5" cy="9" r="1.4" fill="#fff" stroke="#222" stroke-width="0.9"/><circle cx="9" cy="9" r="1.4" fill="#fff" stroke="#222" stroke-width="0.9"/><path d="M0.5 4 V11 H7" fill="none" stroke="#555" stroke-width="0.7"/></svg>
<svg class="a" style="left:437px;top:33px;" width="10.5" height="11" viewBox="0 0 10.5 11"><path d="M1.5 9.5 L8.5 2.5 L9.5 3.5 L2.5 10.5 Z" fill="#d4e4f3" stroke="#b9cde0" stroke-width="0.7"/><path d="M0.5 10.5 H10" stroke="#c9d9ea" stroke-width="0.8"/></svg>
<svg class="a" style="left:450.5px;top:32.5px;" width="11" height="11.5" viewBox="0 0 11 11.5"><path d="M1 9.5 V4.5 Q1 1 4.5 1 Q7 1 8 3 Q10.2 3.2 10.2 5.5 V6" fill="none" stroke="#333" stroke-width="1"/><rect x="5" y="6" width="5.5" height="5" fill="#3a8ae6"/><path d="M6.3 8 H9.3 M6.3 9.6 H9.3" stroke="#fff" stroke-width="0.6"/></svg>
<svg class="a" style="left:466px;top:33.5px;" width="11" height="10" viewBox="0 0 11 10"><path d="M1 8 V4 Q1 1 4 1 Q6.5 1 7.5 2.5 Q10 2.8 10 5 V8 Z" fill="#e4ebf2" stroke="#c2cfdc" stroke-width="0.9"/><circle cx="6" cy="5.5" r="1.8" fill="none" stroke="#c2cfdc" stroke-width="0.8"/></svg>
<svg class="a" style="left:482.5px;top:37px;" width="5" height="3" viewBox="0 0 5 3"><path d="M0 0 H4.5 L2.25 2.6 Z" fill="#444"/></svg>
<svg class="a" style="left:13.5px;top:68.5px;" width="12" height="8" viewBox="0 0 12 8"><path d="M0.5 2.5 H3 M0.5 5 H2.5 M3.5 4.5 L6 3" stroke="#333" stroke-width="1.1"/><rect x="6.5" y="0.8" width="4.5" height="3.5" fill="none" stroke="#444" stroke-width="0.8" stroke-dasharray="1 0.6"/><rect x="1" y="5.8" width="2" height="2" fill="#222"/></svg>
<svg class="a" style="left:28.5px;top:70px;" width="3" height="5" viewBox="0 0 3 5"><path d="M0 0 L3 2.5 L0 5 Z" fill="#222"/></svg>
<svg class="a" style="left:38.5px;top:68.5px;" width="10" height="8" viewBox="0 0 10 8"><rect x="0.5" y="1.5" width="7" height="5.5" fill="none" stroke="#555" stroke-width="0.8" stroke-dasharray="1.2 0.7"/><path d="M6 0.5 L9 3 L7.3 3.3 L8.3 5 L7.5 5.4 L6.6 3.7 L5.6 4.8 Z" fill="#222"/></svg>
<svg class="a" style="left:51.5px;top:70px;" width="3" height="5" viewBox="0 0 3 5"><path d="M0 0 L3 2.5 L0 5 Z" fill="#222"/></svg>
<svg class="a" style="left:63.5px;top:67.5px;" width="10" height="10" viewBox="0 0 10 10"><path d="M3 2.2 A3.5 3.5 0 1 0 6.5 1.8" fill="none" stroke="#333" stroke-width="1"/><path d="M1.8 0.8 L3.2 2.4 L1.5 3.4" fill="none" stroke="#333" stroke-width="0.9"/><path d="M5 3.8 L5 5.8 L3.6 6.6" fill="none" stroke="#333" stroke-width="0.8"/></svg>
<svg class="a" style="left:89.5px;top:65.5px;" width="7" height="9.5" viewBox="0 0 7 9.5"><path d="M0.7 0.5 L6.3 5.6 L3.8 5.9 L5.2 8.7 L4 9.2 L2.7 6.5 L0.7 8.3 Z" fill="#555" stroke="#333" stroke-width="0.5"/></svg>
<svg class="a" style="left:103.5px;top:67.5px;" width="3" height="5" viewBox="0 0 3 5"><path d="M0 0 L3 2.5 L0 5 Z" fill="#222"/></svg>
<div class="a" style="left:12px;top:85px;width:10px;height:1px;background:#c4c4c4"></div>
<svg class="a" style="left:14.5px;top:89.3px;" width="7" height="10" viewBox="0 0 7 10"><path d="M0.8 0.6 L6.2 5.6 L3.9 5.9 L5.2 8.8 L4 9.3 L2.7 6.5 L0.8 8.4 Z" fill="#8a8a8a" stroke="#2e2e2e" stroke-width="0.9" stroke-linejoin="round"/></svg>
<svg class="a" style="left:12px;top:106.5px;" width="12.5" height="9" viewBox="0 0 12.5 9"><rect x="0.5" y="0.5" width="11" height="7.8" fill="none" stroke="#777" stroke-width="0.8" stroke-dasharray="1.3 0.9"/></svg>
<svg class="a" style="left:11.5px;top:133px;" width="13" height="11" viewBox="0 0 13 11"><path d="M0.8 3 L11.8 0.8 V9.5 L0.8 10.2 Z" fill="none" stroke="#9a9a9a" stroke-width="0.9"/></svg>
<svg class="a" style="left:14.5px;top:148.5px;" width="7" height="11.5" viewBox="0 0 7 11.5"><path d="M0.6 2 L6.3 0.6 V9 L0.6 10.8 Z" fill="none" stroke="#9a9a9a" stroke-width="0.9"/><circle cx="2.2" cy="6" r="0.5" fill="#9a9a9a"/></svg>
<svg class="a" style="left:12.5px;top:164px;" width="10" height="10" viewBox="0 0 10 10"><path d="M0.6 2 L9 0.6 V8.3 L0.6 9.4 Z M0.6 5.5 L9 4.5 M4.8 1.3 V8.8" fill="none" stroke="#9a9a9a" stroke-width="0.9"/></svg>
<svg class="a" style="left:14px;top:179.5px;" width="7" height="13" viewBox="0 0 7 13"><path d="M0.6 1.5 L3.5 0.6 L6.3 1.2 V11.5 L3.5 12.4 L0.6 11.5 Z" fill="none" stroke="#9a9a9a" stroke-width="0.9"/></svg>
<svg class="a" style="left:11px;top:196.5px;" width="14" height="9" viewBox="0 0 14 9"><path d="M0.6 0.6 L13.3 5.5 L12.5 8.3 L0.6 3.5 Z" fill="none" stroke="#9a9a9a" stroke-width="0.9"/></svg>
<svg class="a" style="left:10.5px;top:212px;" width="14" height="10" viewBox="0 0 14 10"><path d="M0.6 5 L5 0.6 L13.3 3.5 L8 9.4 Z" fill="none" stroke="#9a9a9a" stroke-width="0.9"/></svg>
<svg class="a" style="left:11.5px;top:227px;" width="13" height="11" viewBox="0 0 13 11"><path d="M1 2 L5 0.6 L12 6 L8.5 10.4 Z M1.5 4 L10.5 8 M2.5 6 L9.5 9.5 M3 1.5 L11 7" fill="none" stroke="#9a9a9a" stroke-width="0.8"/></svg>
<svg class="a" style="left:10px;top:242px;" width="15" height="11" viewBox="0 0 15 11"><path d="M0.6 8 L5.5 1 L14.4 5.5 L9.5 10.4 Z M5.5 1 L9.5 10.4" fill="none" stroke="#9a9a9a" stroke-width="0.9"/></svg>
<svg class="a" style="left:10px;top:258px;" width="15" height="12.5" viewBox="0 0 15 12.5"><path d="M0.6 5 L6 7.5 L14.4 0.8 L9 11.8 L6 7.5 M9 11.8 L0.6 5" fill="none" stroke="#9a9a9a" stroke-width="0.9"/></svg>
<svg class="a" style="left:11px;top:274.5px;" width="13" height="11" viewBox="0 0 13 11"><path d="M0.6 3 L5 0.6 L12.4 4.5 L8 7 Z M0.6 6.5 L8 10.4 L12.4 8" fill="none" stroke="#9a9a9a" stroke-width="0.9"/></svg>
<svg class="a" style="left:12px;top:289.5px;" width="12" height="12" viewBox="0 0 12 12"><path d="M0.6 2 L11.4 0.6 V10.5 L0.6 11.4 Z M0.6 5.5 L11.4 4.2 M0.6 8.5 L11.4 7.5 M4.2 1.5 V11 M7.8 1 V10.8" fill="none" stroke="#9a9a9a" stroke-width="0.8"/></svg>
<svg class="a" style="left:12.5px;top:305.5px;" width="10" height="11" viewBox="0 0 10 11"><path d="M3 10.4 L0.6 6 L4 0.6 L9.4 2 V8 Z M4 0.6 L5 10" fill="none" stroke="#9a9a9a" stroke-width="0.9"/></svg>
<svg class="a" style="left:13px;top:320.5px;" width="9" height="12" viewBox="0 0 9 12"><path d="M1 0.6 H4 V5.5 H8.4 V11.4 M1 0.6 V11.4 M4 5.5 L1 7 M5 8 V11.4" fill="none" stroke="#9a9a9a" stroke-width="0.9"/></svg>
<svg class="a" style="left:11.5px;top:337px;" width="12" height="12" viewBox="0 0 12 12"><path d="M0.6 0.6 H5 V3 H8 V0.6 H11.4 V6 L9 11.4 H3 V8 H0.6 Z" fill="none" stroke="#9a9a9a" stroke-width="0.9"/></svg>
<svg class="a" style="left:10.5px;top:353px;" width="14" height="9" viewBox="0 0 14 9"><path d="M0.6 3 L6 0.6 L13.4 5 L8 8.4 Z M3 1.8 L10.5 6.8 M5 6 L10 2.5" fill="none" stroke="#9a9a9a" stroke-width="0.8"/></svg>
<svg class="a" style="left:10px;top:382.5px;" width="15" height="8.5" viewBox="0 0 15 8.5"><path d="M0.5 6 H14.5 M1.5 4 V8 M13.5 4 V8" stroke="#444" stroke-width="0.9"/><path d="M0.5 6 L3 4.8 M14.5 6 L12 4.8" stroke="#444" stroke-width="0.7"/><text x="6" y="3.3" font-size="3.6" fill="#444" font-family="Liberation Sans">+2</text></svg>
<svg class="a" style="left:10px;top:396.5px;" width="15" height="12" viewBox="0 0 15 12"><circle cx="6" cy="6.5" r="4" fill="none" stroke="#9a9a9a" stroke-width="0.9"/><path d="M6 0.6 V11.8 M0.6 6.5 H11.4" stroke="#9a9a9a" stroke-width="0.8"/><text x="10.5" y="3.5" font-size="3.6" fill="#9a9a9a" font-family="Liberation Sans">+3</text></svg>
<div class="a t" style="left:13.83px;top:412.35px;font-size:11px;line-height:12.10px;font-weight:normal;color:#9a9a9a;-webkit-text-stroke:0;font-weight:normal;">A</div>
<svg class="a" style="left:9.5px;top:430.5px;" width="6" height="6" viewBox="0 0 6 6"><path d="M5.5 0.5 L0.8 5 M0.8 2.5 V5.2 H3.5" fill="none" stroke="#777" stroke-width="0.9"/></svg>
<div class="a t" style="left:16.00px;top:430.00px;font-size:8px;line-height:8.80px;font-weight:normal;color:#9a9a9a;-webkit-text-stroke:0;">A1</div>
<svg class="a" style="left:11px;top:444.5px;" width="13" height="8" viewBox="0 0 13 8"><path d="M0.6 7.5 Q2 2 8 0.6 L12.4 0.6 L8 4 Q10 5.5 12 7.5 Z" fill="#e0e0e0" stroke="#9a9a9a" stroke-width="0.8"/></svg>
<svg class="a" style="left:627px;top:469px;" width="8" height="8" viewBox="0 0 8 8"><circle cx="6" cy="2" r="0.55" fill="#aaa"/><circle cx="6" cy="4" r="0.55" fill="#aaa"/><circle cx="4" cy="4" r="0.55" fill="#aaa"/><circle cx="6" cy="6" r="0.55" fill="#aaa"/><circle cx="4" cy="6" r="0.55" fill="#aaa"/><circle cx="2" cy="6" r="0.55" fill="#aaa"/></svg>
</body></html>
